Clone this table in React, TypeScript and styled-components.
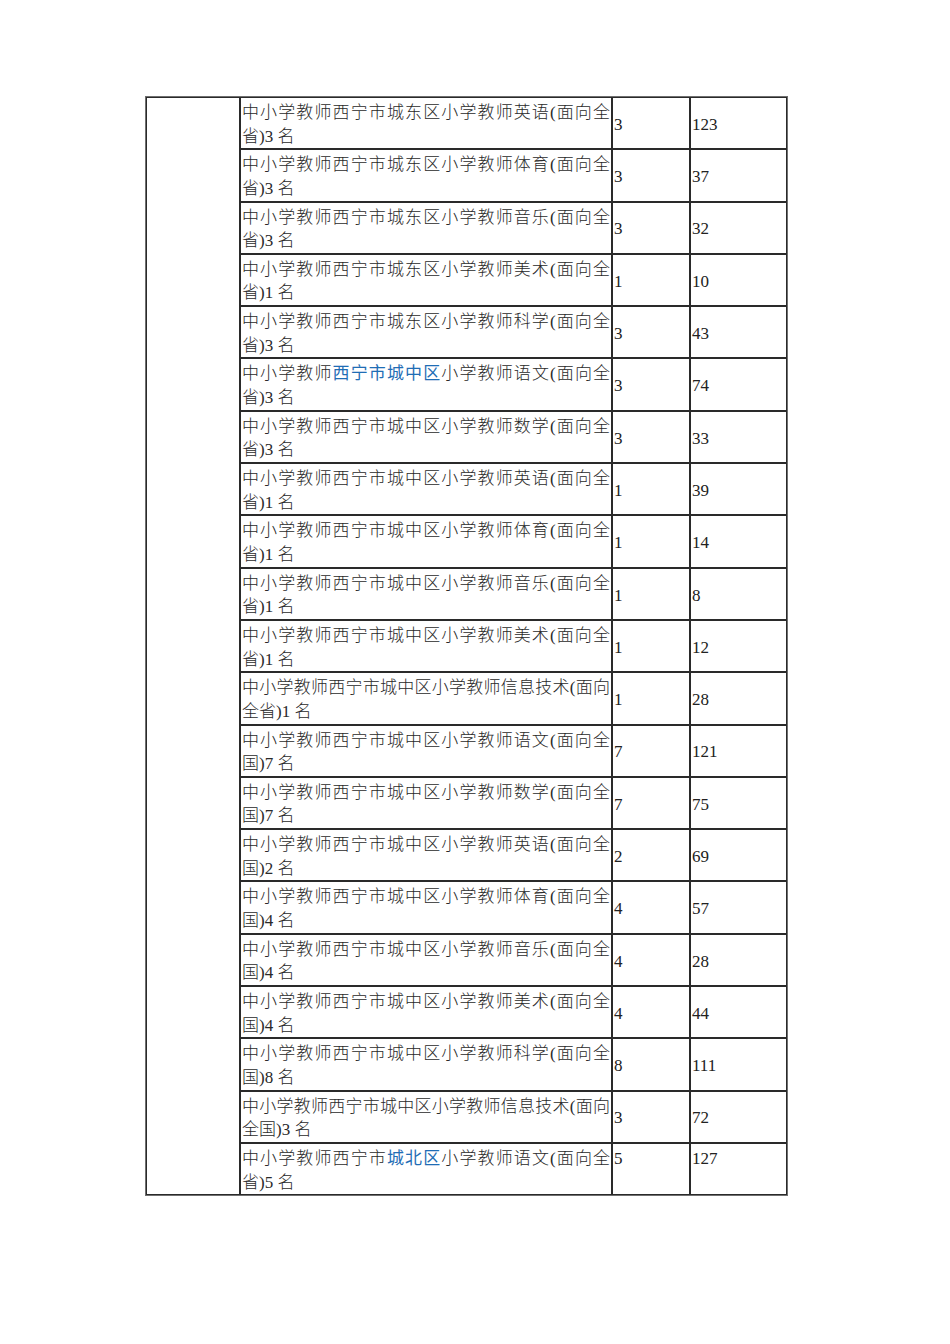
import styled, { createGlobalStyle } from 'styled-components'

const GlobalStyle = createGlobalStyle`
  html, body {
    margin: 0;
    padding: 0;
    background: #ffffff;
  }
  body {
    font-family: "Liberation Serif", "Noto Sans CJK SC", serif;
    color: #222222;
  }
`

const Page = styled.div`
  padding: 96px 0 0 145px;
  width: 950px;
  min-height: 1344px;
  box-sizing: border-box;
`

const Table = styled.table`
  border-collapse: separate;
  border-spacing: 0;
  table-layout: fixed;
  width: 643px;
  border: 1px solid #6f6f6f;
  font-size: 17px;
  line-height: 23.6px;
`

const Row = styled.tr`
  height: 52.3px;
`

const Cell = styled.td<{ width: number; top?: boolean }>`
  width: ${({ width }) => width}px;
  box-sizing: border-box;
  border: 1px solid #2a2a2a;
  padding: 3px 1px 0;
  vertical-align: ${({ top }) => (top ? 'top' : 'middle')};
`

const TitleCell = styled(Cell)`
  text-align: justify;
  vertical-align: top;
  color: #2a2a2a;
  font-weight: 300;
`

const Link = styled.span`
  font-family: "Noto Sans CJK SC", sans-serif;
  font-weight: 400;
  line-height: 1;
  color: #1f6db5;
`

interface Post {
  district: string
  linked?: 'full' | 'district'
  subject: string
  scope: string
  count: number
  applicants: number
}

const posts: Post[] = [
  { district: '城东区', subject: '英语', scope: '省', count: 3, applicants: 123 },
  { district: '城东区', subject: '体育', scope: '省', count: 3, applicants: 37 },
  { district: '城东区', subject: '音乐', scope: '省', count: 3, applicants: 32 },
  { district: '城东区', subject: '美术', scope: '省', count: 1, applicants: 10 },
  { district: '城东区', subject: '科学', scope: '省', count: 3, applicants: 43 },
  { district: '城中区', linked: 'full', subject: '语文', scope: '省', count: 3, applicants: 74 },
  { district: '城中区', subject: '数学', scope: '省', count: 3, applicants: 33 },
  { district: '城中区', subject: '英语', scope: '省', count: 1, applicants: 39 },
  { district: '城中区', subject: '体育', scope: '省', count: 1, applicants: 14 },
  { district: '城中区', subject: '音乐', scope: '省', count: 1, applicants: 8 },
  { district: '城中区', subject: '美术', scope: '省', count: 1, applicants: 12 },
  { district: '城中区', subject: '信息技术', scope: '省', count: 1, applicants: 28 },
  { district: '城中区', subject: '语文', scope: '国', count: 7, applicants: 121 },
  { district: '城中区', subject: '数学', scope: '国', count: 7, applicants: 75 },
  { district: '城中区', subject: '英语', scope: '国', count: 2, applicants: 69 },
  { district: '城中区', subject: '体育', scope: '国', count: 4, applicants: 57 },
  { district: '城中区', subject: '音乐', scope: '国', count: 4, applicants: 28 },
  { district: '城中区', subject: '美术', scope: '国', count: 4, applicants: 44 },
  { district: '城中区', subject: '科学', scope: '国', count: 8, applicants: 111 },
  { district: '城中区', subject: '信息技术', scope: '国', count: 3, applicants: 72 },
  { district: '城北区', linked: 'district', subject: '语文', scope: '省', count: 5, applicants: 127 },
]

const Title = ({ post }: { post: Post }) => {
  const tail = `小学教师${post.subject}(面向全${post.scope})${post.count} 名`
  if (post.linked === 'full') {
    return (
      <>
        中小学教师<Link>西宁市{post.district}</Link>
        {tail}
      </>
    )
  }
  if (post.linked === 'district') {
    return (
      <>
        中小学教师西宁市<Link>{post.district}</Link>
        {tail}
      </>
    )
  }
  return <>{`中小学教师西宁市${post.district}${tail}`}</>
}

export default function App() {
  return (
    <Page>
      <GlobalStyle />
      <Table>
        <tbody>
          {posts.map((post, i) => {
            const top = i === posts.length - 1
            return (
              <Row key={i}>
                {i === 0 && <Cell width={94} rowSpan={posts.length} />}
                <TitleCell width={372}>
                  <Title post={post} />
                </TitleCell>
                <Cell width={78} top={top}>
                  {post.count}
                </Cell>
                <Cell width={97} top={top}>
                  {post.applicants}
                </Cell>
              </Row>
            )
          })}
        </tbody>
      </Table>
    </Page>
  )
}
